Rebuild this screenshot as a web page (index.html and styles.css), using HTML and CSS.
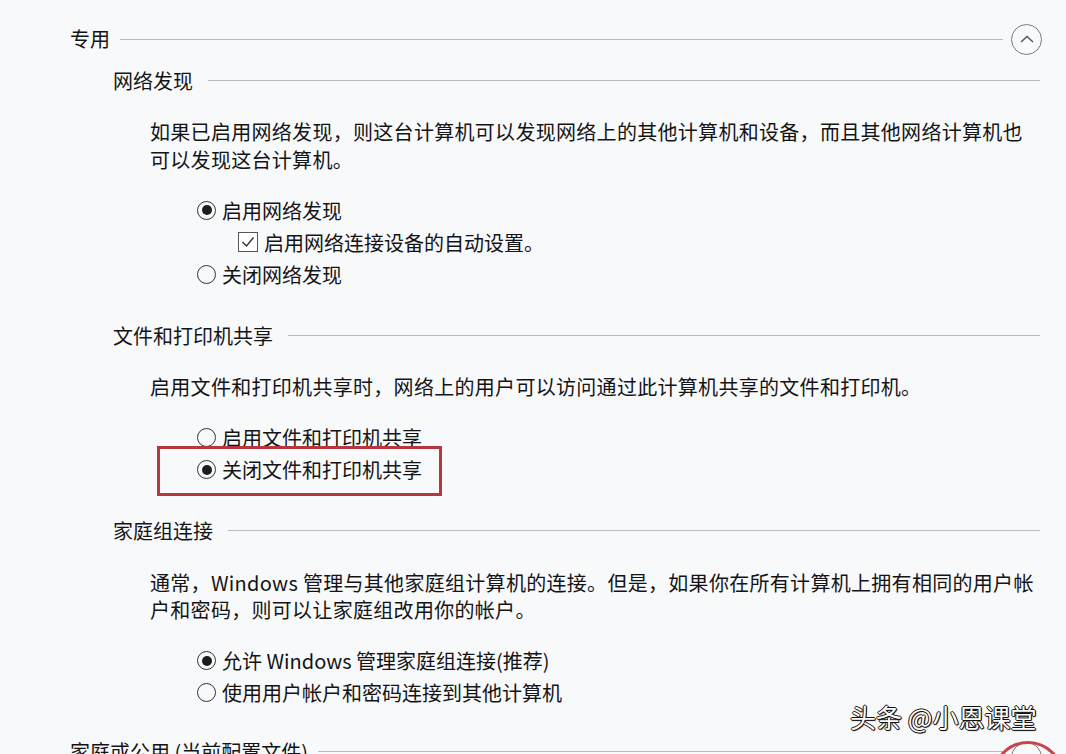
FILE: index.html
```html
<!DOCTYPE html>
<html>

<head>
    <meta charset="utf-8" />
    <title>高级共享设置</title>
    <link rel="stylesheet" href="styles.css">
</head>

<body>
    <div class="page">
        <div class="group-head">
            <span class="group-title">专用</span>
            <span class="rule"></span>
            <span class="fold">
                <svg width="14" height="8" viewBox="0 0 14 8"><path d="M1 7 L7 1.5 L13 7" fill="none" stroke="#555" stroke-width="1.4"/></svg>
            </span>
        </div>

        <!-- 网络发现 -->
        <div class="section first">
            <div class="sec-head"><span>网络发现</span><span class="rule"></span></div>
            <p class="desc">如果已启用网络发现，则这台计算机可以发现网络上的其他计算机和设备，而且其他网络计算机也<br>可以发现这台计算机。</p>
            <div class="options">
                <div class="opt"><span class="radio on"></span>启用网络发现</div>
                <div class="opt sub">
                    <span class="check">
                        <svg width="14" height="12" viewBox="0 0 14 12"><path d="M1.5 6 L5.5 10 L12.5 1.5" fill="none" stroke="#333" stroke-width="1.4"/></svg>
                    </span>启用网络连接设备的自动设置。
                </div>
                <div class="opt"><span class="radio"></span>关闭网络发现</div>
            </div>
        </div>

        <!-- 文件和打印机共享 -->
        <div class="section">
            <div class="sec-head"><span>文件和打印机共享</span><span class="rule"></span></div>
            <p class="desc">启用文件和打印机共享时，网络上的用户可以访问通过此计算机共享的文件和打印机。</p>
            <div class="options">
                <div class="opt"><span class="radio"></span>启用文件和打印机共享</div>
                <div class="opt marked"><span class="radio on"></span>关闭文件和打印机共享</div>
            </div>
        </div>

        <!-- 家庭组连接 -->
        <div class="section">
            <div class="sec-head"><span>家庭组连接</span><span class="rule"></span></div>
            <p class="desc">通常，Windows 管理与其他家庭组计算机的连接。但是，如果你在所有计算机上拥有相同的用户帐<br>户和密码，则可以让家庭组改用你的帐户。</p>
            <div class="options">
                <div class="opt"><span class="radio on"></span>允许 Windows 管理家庭组连接(推荐)</div>
                <div class="opt"><span class="radio"></span>使用用户帐户和密码连接到其他计算机</div>
            </div>
        </div>

        <div class="group-head last">
            <span class="group-title">家庭或公用 (当前配置文件)</span>
            <span class="rule"></span>
            <span class="fold down">
                <svg width="14" height="8" viewBox="0 0 14 8"><path d="M1 1 L7 6.5 L13 1" fill="none" stroke="#555" stroke-width="1.4"/></svg>
            </span>
        </div>

        <div class="mark">头条 @小恩课堂</div>
    </div>
</body>

</html>
```

FILE: styles.css
```css
body,
p {
    margin: 0;
    padding: 0;
}

body {
    background: #f8f9fb;
    color: #141414;
    font-family: "Noto Sans CJK SC", "Liberation Sans", sans-serif;
    font-size: 20px;
}

.page {
    position: relative;
    height: 754px;
    padding: 23px 24px 0 70px;
    box-sizing: border-box;
    overflow: hidden;
}

.group-head {
    display: flex;
    align-items: center;
    height: 32px;
}

.group-head.last {
    margin-top: 27px;
}

.group-title {
    line-height: 28px;
    white-space: nowrap;
}

.rule {
    flex: 1;
    height: 1px;
    background: #b9bdc2;
}

.group-head .rule {
    margin: 0 8px 0 10px;
}

.fold {
    position: relative;
    display: flex;
    align-items: center;
    justify-content: center;
    width: 29px;
    height: 29px;
    border: 1.5px solid #7a7a7a;
    border-radius: 50%;
}

.fold.down {
    top: 6px;
}

/* 红圈标注 */
.fold.down::after {
    content: "";
    position: absolute;
    left: -20px;
    top: -2px;
    width: 66px;
    height: 66px;
    border: 3px solid #c5474d;
    border-radius: 50%;
}

.section {
    margin-left: 43px;
}

.sec-head {
    display: flex;
    align-items: center;
    height: 28px;
    margin-top: 31px;
}

.section.first .sec-head {
    margin-top: 11px;
}

.sec-head span:first-child {
    white-space: nowrap;
}

.sec-head .rule {
    margin: 0 2px 0 15px;
}

.desc {
    margin: 24px 0 0 37px;
    line-height: 27.5px;
    letter-spacing: 0.3px;
    white-space: nowrap;
}

.options {
    margin: 21px 0 0 84px;
}

.opt {
    position: relative;
    display: flex;
    align-items: center;
    height: 32px;
    white-space: nowrap;
}

.opt.sub {
    padding-left: 41px;
}

/* 红框标注 */
.opt.marked::after {
    content: "";
    position: absolute;
    left: -40px;
    top: -8px;
    width: 279px;
    height: 44px;
    border: 3px solid #b5383e;
}

.radio {
    position: relative;
    width: 17px;
    height: 17px;
    margin-right: 6px;
    border: 1.5px solid #333;
    border-radius: 50%;
    flex-shrink: 0;
}

.radio.on::after {
    content: "";
    position: absolute;
    left: 3.5px;
    top: 3.5px;
    width: 10px;
    height: 10px;
    border-radius: 50%;
    background: #1c1c1c;
}

.check {
    display: flex;
    align-items: center;
    justify-content: center;
    width: 18px;
    height: 18px;
    margin-right: 6px;
    border: 1px solid #555;
    background: #fff;
    flex-shrink: 0;
}

/* 水印 */
.mark {
    position: absolute;
    left: 850px;
    top: 702px;
    font-size: 26px;
    line-height: 30px;
    color: #fff;
    white-space: nowrap;
    text-shadow: 1px 0 0 #111, -1px 0 0 #111, 0 1px 0 #111, 0 -1px 0 #111, 1px 1px 1px #222;
}
```
